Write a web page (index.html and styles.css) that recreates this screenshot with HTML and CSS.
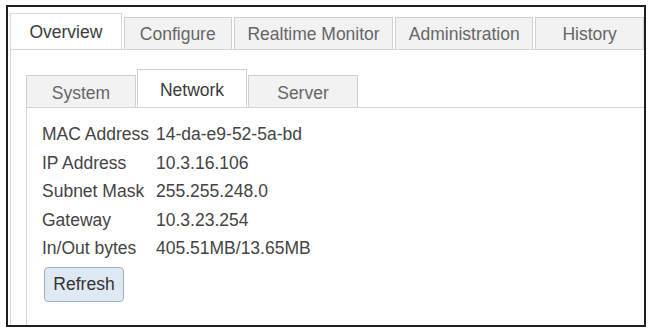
FILE: index.html
```html
<!DOCTYPE html>
<html lang="en">
<head>
    <meta charset="UTF-8">
    <title>Overview - Network</title>
    <link rel="stylesheet" href="styles.css">
</head>
<body>
    <div class="window">
        <!-- main tabs -->
        <div class="tabs">
            <div class="tab active tab-overview">Overview</div>
            <div class="tab tab-configure">Configure</div>
            <div class="tab tab-realtime">Realtime Monitor</div>
            <div class="tab tab-admin">Administration</div>
            <div class="tab tab-history">History</div>
        </div>
        <div class="panel">
            <div class="subtabs">
                <div class="subtab">System</div>
                <div class="subtab active">Network</div>
                <div class="subtab">Server</div>
            </div>
            <div class="subpanel">
                <div class="info">
                    <span class="label">MAC Address</span><span class="value">14-da-e9-52-5a-bd</span>
                    <span class="label">IP Address</span><span class="value">10.3.16.106</span>
                    <span class="label">Subnet Mask</span><span class="value">255.255.248.0</span>
                    <span class="label">Gateway</span><span class="value">10.3.23.254</span>
                    <span class="label">In/Out bytes</span><span class="value">405.51MB/13.65MB</span>
                </div>
                <button class="refresh">Refresh</button>
            </div>
        </div>
    </div>
</body>
</html>
```

FILE: styles.css
```css
body {
    margin: 0;
    background-color: #fff;
    font-family: "Liberation Sans", Arial, sans-serif;
    font-size: 17.5px;
    color: #444;
}
.window {
    margin: 5px 0 0 6px;
    width: 634px;
    height: 312px;
    border: 2px solid #1e1e1e;
    padding: 6px 0 0 2px;
    display: flex;
    flex-direction: column;
    overflow: hidden;
}
.tabs {
    display: flex;
    align-items: flex-end;
    gap: 2px;
}
.tab {
    height: 33px;
    display: flex;
    align-items: center;
    justify-content: center;
    background-color: #f2f2f2;
    border: 1px solid #d0d0d0;
    border-bottom: none;
    color: #666;
    box-sizing: border-box;
}
.tab.active {
    height: 37px;
    background-color: #fff;
    color: #3a3a3a;
    border-color: #d8d8d8;
}
.tab-overview { width: 112px; }
.tab-configure { width: 108px; }
.tab-realtime { width: 160px; }
.tab-admin { width: 138px; }
.tab-history { width: 109px; }
.panel {
    flex: 1;
    border-left: 1px solid #d4d4d4;
    border-top: 1px solid #d4d4d4;
    margin-top: -1px;
    padding: 19px 0 0 15px;
    display: flex;
    flex-direction: column;
}
.subtabs {
    display: flex;
    align-items: flex-end;
    gap: 1px;
}
.subtab {
    width: 110px;
    height: 33px;
    display: flex;
    align-items: center;
    justify-content: center;
    padding-top: 2px;
    background-color: #f2f2f2;
    border: 1px solid #d0d0d0;
    border-bottom: none;
    color: #666;
    box-sizing: border-box;
}
.subtab.active {
    height: 39px;
    background-color: #fff;
    color: #3a3a3a;
}
.subpanel {
    flex: 1;
    border-left: 1px solid #d4d4d4;
    border-top: 1px solid #d4d4d4;
    margin-top: -1px;
    padding: 12px 0 0 15px;
}
.info {
    display: grid;
    grid-template-columns: 114px auto;
    line-height: 28.5px;
}
.refresh {
    margin: 4px 0 0 2px;
    width: 80px;
    height: 35px;
    font-family: inherit;
    font-size: 17.5px;
    color: #333;
    background-color: #dfe9f4;
    border: 1px solid #9fb0c2;
    border-radius: 4px;
    padding: 0;
}
```
